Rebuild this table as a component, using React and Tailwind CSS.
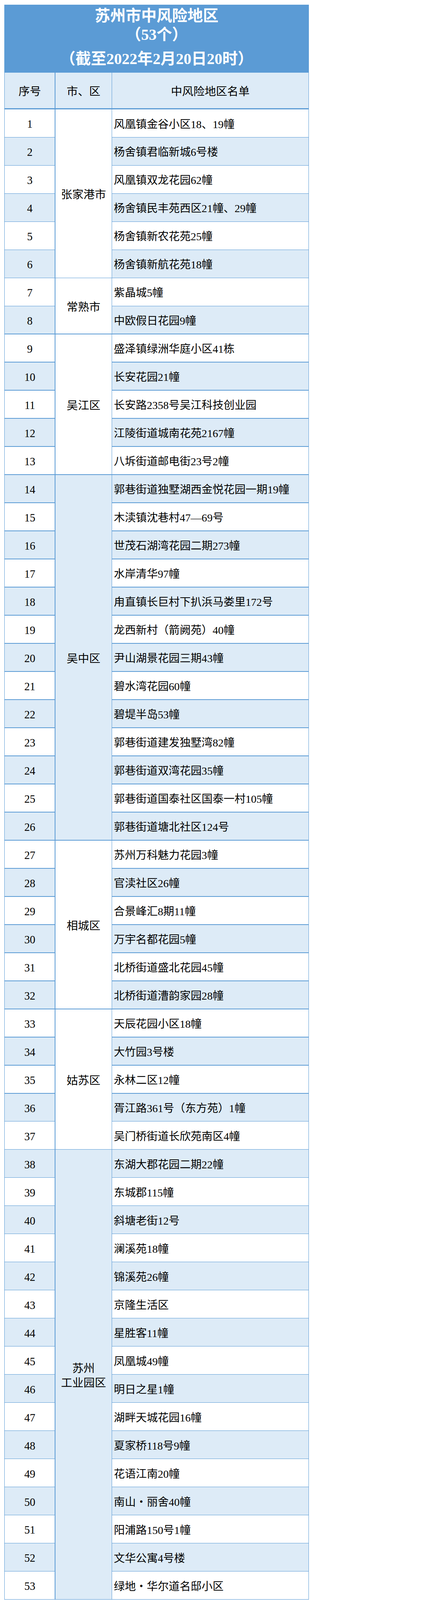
import React from "react";

const groups = [
  { city: ["张家港市"], items: ["风凰镇金谷小区18、19幢", "杨舍镇君临新城6号楼", "风凰镇双龙花园62幢", "杨舍镇民丰苑西区21幢、29幢", "杨舍镇新农花苑25幢", "杨舍镇新航花苑18幢"] },
  { city: ["常熟市"], items: ["紫晶城5幢", "中欧假日花园9幢"] },
  { city: ["吴江区"], items: ["盛泽镇绿洲华庭小区41栋", "长安花园21幢", "长安路2358号吴江科技创业园", "江陵街道城南花苑2167幢", "八坼街道邮电街23号2幢"] },
  { city: ["吴中区"], items: ["郭巷街道独墅湖西金悦花园一期19幢", "木渎镇沈巷村47—69号", "世茂石湖湾花园二期273幢", "水岸清华97幢", "甪直镇长巨村下扒浜马娄里172号", "龙西新村（箭阙苑）40幢", "尹山湖景花园三期43幢", "碧水湾花园60幢", "碧堤半岛53幢", "郭巷街道建发独墅湾82幢", "郭巷街道双湾花园35幢", "郭巷街道国泰社区国泰一村105幢", "郭巷街道塘北社区124号"] },
  { city: ["相城区"], items: ["苏州万科魅力花园3幢", "官渎社区26幢", "合景峰汇8期11幢", "万宇名都花园5幢", "北桥街道盛北花园45幢", "北桥街道漕韵家园28幢"] },
  { city: ["姑苏区"], items: ["天辰花园小区18幢", "大竹园3号楼", "永林二区12幢", "胥江路361号（东方苑）1幢", "吴门桥街道长欣苑南区4幢"] },
  { city: ["苏州", "工业园区"], items: ["东湖大郡花园二期22幢", "东城郡115幢", "斜塘老街12号", "澜溪苑18幢", "锦溪苑26幢", "京隆生活区", "星胜客11幢", "凤凰城49幢", "明日之星1幢", "湖畔天城花园16幢", "夏家桥118号9幢", "花语江南20幢", "南山・丽舍40幢", "阳浦路150号1幢", "文华公寓4号楼", "绿地・华尔道名邸小区"] },
];

const spanClass = {
  2: "row-span-2",
  5: "row-span-5",
  6: "row-span-6",
  13: "row-span-[13]",
  16: "row-span-[16]",
};

const FONT = { fontFamily: '"Liberation Serif", "Noto Sans CJK SC", serif' };

export default function App() {
  const cells = [];
  let n = 0;
  groups.forEach((g, gi) => {
    g.items.forEach((item, ii) => {
      n += 1;
      const even = n % 2 === 0;
      const bg = even ? "bg-[#ddebf7]" : "bg-white";
      cells.push(
        <div key={`n${n}`} className={`${bg} flex items-center justify-center pt-[6.5px] text-[28.4px] text-black`}>
          {n}
        </div>
      );
      if (ii === 0) {
        cells.push(
          <div
            key={`c${gi}`}
            className={`${spanClass[g.items.length]} ${bg} flex flex-col items-center justify-center pt-[7px] text-[28.8px] leading-[37.4px] text-black`}
          >
            {g.city.map((c) => (
              <span key={c}>{c}</span>
            ))}
          </div>
        );
      }
      cells.push(
        <div key={`t${n}`} className={`${bg} flex items-center pl-[4.3px] pt-[6.5px] text-[28.1px] whitespace-nowrap text-black`}>
          {item}
        </div>
      );
    });
  });

  return (
    <div className="w-full bg-white pt-[11.5px] pl-[10.8px] pb-[11px]" style={FONT}>
      <div className="w-[780.5px] bg-[#5b9bd5] p-[1.44px]">
        <div className="h-[171.4px] mb-[1.44px] pt-[4.3px] text-white text-[39.6px] font-bold text-center">
          <div className="leading-[48.2px]">苏州市中风险地区</div>
          <div className="leading-[48.2px]">（53个）</div>
          <div className="leading-[48.2px] mt-[13.7px]">（截至2022年2月20日20时）</div>
        </div>
        <div className="grid grid-cols-[128.2px_144px_502.5px] gap-x-[1.44px] h-[91.4px] mb-[2.9px] text-[28.8px] text-black">
          <div className="bg-[#ddebf7] flex items-center justify-center pt-[5.8px]">序号</div>
          <div className="bg-[#ddebf7] flex items-center justify-center pt-[5.8px]">市、区</div>
          <div className="bg-[#ddebf7] flex items-center justify-center pt-[5.8px]">中风险地区名单</div>
        </div>
        <div className="grid grid-cols-[128.2px_144px_502.5px] auto-rows-[70.56px] gap-[1.44px]">{cells}</div>
      </div>
    </div>
  );
}
